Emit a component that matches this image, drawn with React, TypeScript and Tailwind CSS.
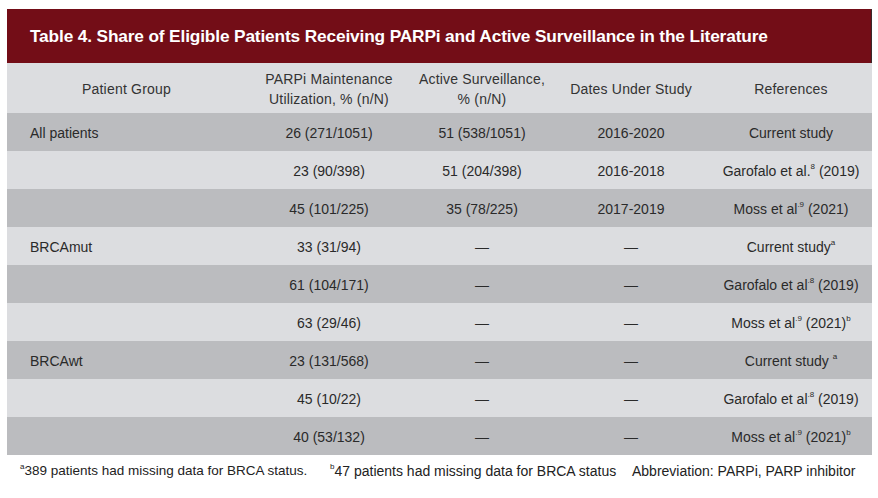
type Row = {
  group: string;
  parpi: string;
  active: string;
  dates: string;
  ref: React.ReactNode;
  dark: boolean;
};

function Sup({ children }: { children: React.ReactNode }) {
  return <sup className="relative top-[-1px] align-super text-[8px] leading-none">{children}</sup>;
}

const rows: Row[] = [
  { group: "All patients", parpi: "26 (271/1051)", active: "51 (538/1051)", dates: "2016-2020", ref: "Current study", dark: true },
  {
    group: "",
    parpi: "23 (90/398)",
    active: "51 (204/398)",
    dates: "2016-2018",
    ref: (
      <>
        Garofalo et al.<Sup>8</Sup> (2019)
      </>
    ),
    dark: false,
  },
  {
    group: "",
    parpi: "45 (101/225)",
    active: "35 (78/225)",
    dates: "2017-2019",
    ref: (
      <>
        Moss et al<Sup>.9</Sup> (2021)
      </>
    ),
    dark: true,
  },
  {
    group: "BRCAmut",
    parpi: "33 (31/94)",
    active: "—",
    dates: "—",
    ref: (
      <>
        Current study<Sup>a</Sup>
      </>
    ),
    dark: false,
  },
  {
    group: "",
    parpi: "61 (104/171)",
    active: "—",
    dates: "—",
    ref: (
      <>
        Garofalo et al<Sup>.8</Sup> (2019)
      </>
    ),
    dark: true,
  },
  {
    group: "",
    parpi: "63 (29/46)",
    active: "—",
    dates: "—",
    ref: (
      <>
        Moss et al<Sup>.9</Sup> (2021)<Sup>b</Sup>
      </>
    ),
    dark: false,
  },
  {
    group: "BRCAwt",
    parpi: "23 (131/568)",
    active: "—",
    dates: "—",
    ref: (
      <>
        Current study <Sup>a</Sup>
      </>
    ),
    dark: true,
  },
  {
    group: "",
    parpi: "45 (10/22)",
    active: "—",
    dates: "—",
    ref: (
      <>
        Garofalo et al<Sup>.8</Sup> (2019)
      </>
    ),
    dark: false,
  },
  {
    group: "",
    parpi: "40 (53/132)",
    active: "—",
    dates: "—",
    ref: (
      <>
        Moss et al<Sup>.9</Sup> (2021)<Sup>b</Sup>
      </>
    ),
    dark: true,
  },
];

export default function App() {
  return (
    <div
      className="h-[498px] w-[878px] bg-white pl-[7px] pr-[6px] pt-[9px] text-[#2a2a2a]"
      style={{ fontFamily: '"Liberation Sans", Arial, sans-serif' }}
    >
      <div className="flex h-[54px] items-center border-r border-[#3a2a2c] bg-[#730d17] pl-[23px] pt-[1px]">
        <h1 className="text-[17.3px] font-bold tracking-[-0.15px] text-white">
          Table 4. Share of Eligible Patients Receiving PARPi and Active Surveillance in the Literature
        </h1>
      </div>

      <div className="flex h-[50px] items-center bg-[#dcdde0] pt-[1px] text-center text-[14px] leading-[20px] tracking-[0.2px] text-[#333]">
        <div className="w-[239px]">Patient Group</div>
        <div className="w-[166px]">
          PARPi Maintenance
          <br />
          Utilization, % (n/N)
        </div>
        <div className="w-[140px]">
          Active Surveillance,
          <br />% (n/N)
        </div>
        <div className="w-[158px]">Dates Under Study</div>
        <div className="w-[162px]">References</div>
      </div>

      {rows.map((row, i) => (
        <div
          key={i}
          className={`flex h-[38px] items-center pt-[2px] text-[14px] ${row.dark ? "bg-[#bbbcbf]" : "bg-[#dcdde0]"}`}
        >
          <div className="w-[239px] pl-[23px]">{row.group}</div>
          <div className="w-[166px] text-center">{row.parpi}</div>
          <div className="w-[140px] text-center">{row.active}</div>
          <div className="w-[158px] text-center">{row.dates}</div>
          <div className="w-[162px] text-center">{row.ref}</div>
        </div>
      ))}

      <div className="flex pt-[6px] text-[14px] text-[#222]">
        <div className="w-[323px] pl-[13px] text-[13.5px]">
          <Sup>a</Sup>389 patients had missing data for BRCA status.
        </div>
        <div className="w-[302px]">
          <Sup>b</Sup>47 patients had missing data for BRCA status
        </div>
        <div>Abbreviation: PARPi, PARP inhibitor</div>
      </div>
    </div>
  );
}
